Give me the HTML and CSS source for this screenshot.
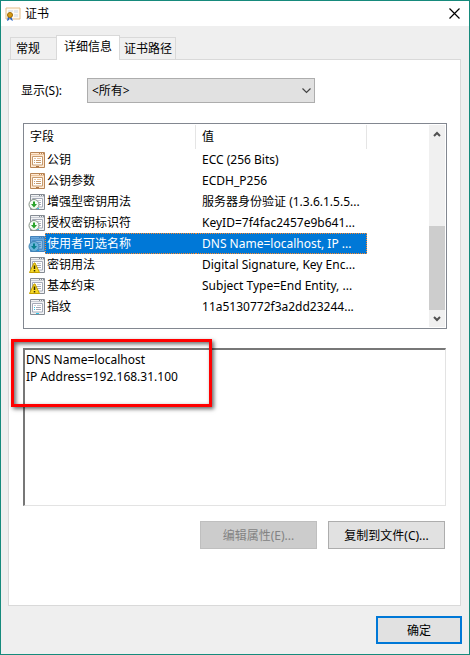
FILE: index.html
```html
<!DOCTYPE html>
<html lang="zh-CN">
<head>
<meta charset="utf-8">
<meta name="viewport" content="width=device-width, initial-scale=1">
<title>证书</title>
<link rel="stylesheet" href="styles.css">
</head>
<body>
<svg class="defs" aria-hidden="true">
  <defs>
    <g id="page" fill="none" stroke="currentColor">
      <path d="M.5.5h14v15H.5z" fill="var(--paper)"/>
      <path d="M1 2.500h13" stroke="var(--soft)"/>
      <path d="M9 1.500h1M11 1.500h1M13 1.500h1"/>
      <path d="M2.500 4.500h10v8.500h-10z" fill="#fff" stroke="var(--line)"/>
      <path d="M4 6.500h2M7 6.500h4" stroke="var(--soft)"/>
      <path d="M4 8.500h1M6 8.500h5M4 10.500h1M6 10.500h5" stroke="var(--line)"/>
      <path d="M6 14.500h3" stroke="var(--dot)"/>
    </g>
    <g id="arrow">
      <circle cx="4" cy="10.500" r="5" fill="var(--disc)" stroke="var(--ring)"/>
      <path d="M3 7.500h2V10h2l-3 3.500L1 10h2z" fill="var(--arrow)"/>
    </g>
    <g id="warning">
      <path d="M4 6L-.5 15.500h10L5 6z" fill="#f7d827" stroke="#c4a000"/>
      <path d="M4.500 8.500v3.500M4.500 13v1.500" stroke="#332b00" stroke-width="1.500"/>
    </g>
  </defs>
</svg>
<main class="window">
  <header class="titlebar">
    <svg class="cert-icon" viewBox="0 0 16 14" aria-hidden="true">
      <path d="M1 1h14v11H1z" fill="#fffaf2" stroke="#e3bd87"/>
      <path d="M3 3h5v2H3zM9 3h4v3H9zM9 7h4v3H9z" fill="#e4e8ee"/>
      <path d="M3 9l-1 5 2-1 1-3zM6 9l2 5-2-1-2-3z" fill="#2864c8"/>
      <circle cx="5" cy="8" r="2.500" fill="#d99b13" stroke="#9c6a06"/>
    </svg>
    <h1 class="title">证书</h1>
    <button class="close" type="button" aria-label="关闭">
      <svg viewBox="0 0 11 11"><path d="M.5.5l10 10M10.500.5l-10 10" fill="none" stroke="#000" stroke-width="1.200"/></svg>
    </button>
  </header>

  <div class="content">
    <div class="tabs" role="tablist">
      <button class="tab" type="button" role="tab">常规</button>
      <button class="tab tab-active" type="button" role="tab" aria-selected="true">详细信息</button>
      <button class="tab" type="button" role="tab">证书路径</button>
    </div>

    <section class="panel">
      <div class="filter">
        <label for="show">显示(S):</label>
        <div class="combo">
          <select id="show"><option>&lt;所有&gt;</option></select>
          <svg class="combo-arrow" viewBox="0 0 9 6" aria-hidden="true"><path d="M.5.5l4 4 4-4" fill="none" stroke="#444" stroke-width="1.200"/></svg>
        </div>
      </div>

      <div class="list">
        <div class="list-body">
          <table class="fields">
            <colgroup><col class="col-icon"><col class="col-name"><col class="col-value"></colgroup>
            <thead><tr><th colspan="2"><span class="head">字段</span></th><th><span class="head">值</span></th></tr></thead>
            <tbody>
              <tr><td class="icon tan"><svg viewBox="0 0 15 16"><use href="#page"/></svg></td><td>公钥</td><td class="value">ECC (256 Bits)</td></tr>
              <tr><td class="icon tan"><svg viewBox="0 0 15 16"><use href="#page"/></svg></td><td>公钥参数</td><td class="value">ECDH_P256</td></tr>
              <tr><td class="icon"><svg viewBox="0 0 15 16"><use href="#page"/><use href="#arrow"/></svg></td><td>增强型密钥用法</td><td class="value">服务器身份验证 (1.3.6.1.5.5...</td></tr>
              <tr><td class="icon"><svg viewBox="0 0 15 16"><use href="#page"/><use href="#arrow"/></svg></td><td>授权密钥标识符</td><td class="value">KeyID=7f4fac2457e9b641...</td></tr>
              <tr class="selected"><td class="icon blue"><svg viewBox="0 0 15 16"><use href="#page"/><path d="M2 4h11v9H2z" fill="#5899cf" opacity=".65"/><use href="#arrow"/></svg></td><td>使用者可选名称</td><td class="value">DNS Name=localhost, IP ...</td></tr>
              <tr><td class="icon"><svg viewBox="0 0 15 16"><use href="#page"/><use href="#warning"/></svg></td><td>密钥用法</td><td class="value">Digital Signature, Key Enc...</td></tr>
              <tr><td class="icon"><svg viewBox="0 0 15 16"><use href="#page"/><use href="#warning"/></svg></td><td>基本约束</td><td class="value">Subject Type=End Entity, ...</td></tr>
              <tr><td class="icon"><svg viewBox="0 0 15 16"><use href="#page"/><path d="M4 8.500h1M4 10.500h1" stroke="#2fc5e8"/></svg></td><td>指纹</td><td class="value">11a5130772f3a2dd23244...</td></tr>
            </tbody>
          </table>
        </div>
        <div class="scrollbar">
          <button class="scroll-button" type="button" aria-label="向上滚动"><svg viewBox="0 0 8 6"><path d="M1 5l3-3 3 3" fill="none" stroke="#505050" stroke-width="2"/></svg></button>
          <div class="track"><div class="thumb"></div></div>
          <button class="scroll-button" type="button" aria-label="向下滚动"><svg viewBox="0 0 8 6"><path d="M1 1l3 3 3-3" fill="none" stroke="#505050" stroke-width="2"/></svg></button>
        </div>
      </div>

      <div class="detail">
        <textarea class="detail-text" aria-label="字段值" readonly>DNS Name=localhost
IP Address=192.168.31.100</textarea>
        <div class="highlight"></div>
      </div>

      <div class="actions">
        <button class="button" type="button" disabled>编辑属性(E)...</button>
        <button class="button" type="button">复制到文件(C)...</button>
      </div>
    </section>

    <footer class="footer">
      <button class="button button-default" type="button">确定</button>
    </footer>
  </div>
</main>
</body>
</html>
```
FILE: styles.css
```css
* {
  box-sizing: border-box;
}

body {
  margin: 0;
}

body,
button,
select,
textarea {
  font-family: "Noto Sans", "Noto Sans CJK SC", sans-serif;
  font-size: 12px;
  line-height: 17px;
  color: #000;
}

button {
  padding: 0;
}

svg {
  display: block;
  overflow: visible;
}

.defs {
  position: absolute;
  width: 0;
  height: 0;
}

.window {
  display: flex;
  flex-direction: column;
  min-height: 100vh;
  border: 1px solid #168a7c;
  background: #efefef;
}

.titlebar {
  display: flex;
  align-items: center;
  height: 25px;
  padding: 0 9px 0 4px;
  background: #fff;
}

.cert-icon {
  width: 16px;
  height: 14px;
}

.title {
  flex: 1;
  margin: 0 0 0 4px;
  font-size: 12px;
  font-weight: 400;
}

.close {
  border: 0;
  background: none;
}

.close svg {
  width: 11px;
  height: 11px;
}

.content {
  display: flex;
  flex: 1;
  flex-direction: column;
  padding: 9px 7px 10px;
}

.tabs {
  display: flex;
  align-items: flex-end;
  padding-left: 2px;
}

.tab {
  height: 22px;
  padding: 0 3px 0 4px;
  border: 1px solid #d9d9d9;
  border-bottom: 0;
  background: #f0f0f0;
}

.tab:first-child {
  padding: 0 16px 0 5px;
  border-right: 0;
}

.tab:last-child {
  border-left: 0;
}

.tab-active {
  z-index: 1;
  height: 25px;
  margin-bottom: -1px;
  padding: 0 7px 3px;
  background: #fff;
}

.panel {
  flex: 1;
  margin-right: 1px;
  padding: 18px 14px 56px;
  border: 1px solid #d9d9d9;
  background: #fff;
}

.filter {
  display: grid;
  grid-template-columns: 66px minmax(0, 228px);
  align-items: center;
  margin-left: -2px;
}

.combo {
  position: relative;
}

.combo select {
  display: block;
  width: 100%;
  height: 25px;
  padding: 0 4px;
  border: 1px solid #adadad;
  border-radius: 0;
  background: #e1e1e1;
  appearance: none;
}

.combo-arrow {
  position: absolute;
  top: 10px;
  right: 4px;
  width: 9px;
  height: 6px;
}

.list {
  display: flex;
  min-height: 206px;
  margin-top: 20px;
  margin-right: -1px;
  border: 1px solid #828790;
}

.list-body {
  flex: 1;
  min-width: 0;
}

.fields {
  width: 343px;
  border-collapse: separate;
  border-spacing: 0;
  table-layout: fixed;
}

.col-icon {
  width: 21px;
}

.col-name {
  width: 151px;
}

.col-value {
  width: 171px;
}

.fields th {
  height: 25px;
  padding: 1px 0 0;
  font-weight: 400;
  text-align: left;
}

.head {
  display: block;
  padding: 3px 0 4px 6px;
  border-right: 1px solid #e5e5e5;
}

.fields td {
  height: 21px;
  padding: 0 2px;
  border: 1px solid transparent;
  border-width: 1px 0;
  white-space: nowrap;
}

.fields .value {
  padding-left: 6px;
}

.fields .icon {
  --paper: #f1f2f4;
  --soft: #c7cbd2;
  --line: #a5aab8;
  --dot: #2fc5e8;
  --disc: #f4fbf4;
  --ring: #8b958b;
  --arrow: #2ba32b;
  padding: 0 0 0 6px;
  color: #858b93;
}

.fields .tan {
  --paper: #ffe9d2;
  --soft: #e9c29c;
  --line: #c79b6f;
  --dot: #ad7544;
  color: #b98555;
}

.fields .blue {
  --paper: #6aa9dc;
  --soft: #5595cf;
  --line: #3779bb;
  --dot: #159be8;
  --disc: #6bb4dc;
  --ring: #4384b4;
  --arrow: #087f8c;
  color: #4382bb;
}

.icon svg {
  width: 15px;
  height: 16px;
}

.fields .selected td:not(.icon) {
  border-color: #ff8728;
  border-style: dotted;
  background: #0078d7;
  background-clip: border-box;
  color: #fff;
}

.fields .selected td:nth-child(2) {
  padding-left: 1px;
  border-left-width: 1px;
}

.fields .selected .value {
  border-right-width: 1px;
}

.scrollbar {
  display: flex;
  flex-direction: column;
  width: 16px;
  margin: 1px;
  background: #f0f0f0;
}

.scroll-button {
  display: flex;
  align-items: center;
  justify-content: center;
  height: 17px;
  border: 0;
  background: none;
}

.scroll-button svg {
  width: 8px;
  height: 6px;
}

.track {
  display: flex;
  flex: 1;
  flex-direction: column;
  justify-content: flex-end;
}

.thumb {
  height: 50%;
  background: #cdcdcd;
}

.detail {
  position: relative;
  margin-top: 19px;
}

.detail-text {
  display: block;
  width: 100%;
  height: 158px;
  padding: 1px;
  border: 2px solid;
  border-color: #777 #e3e3e3 #e3e3e3 #777;
  border-width: 2px 1px 1px 2px;
  outline: 0;
  background: #fff;
  resize: none;
}

.highlight {
  position: absolute;
  top: -9px;
  left: -12px;
  width: 201px;
  height: 68px;
  border: 3px solid #f00;
  box-shadow: 2px 2px 4px #0009, inset 2px 2px 4px #0009;
  pointer-events: none;
}

.actions {
  display: flex;
  justify-content: flex-end;
  gap: 11px;
  margin-top: 15px;
  padding-right: 1px;
}

.button {
  width: 117px;
  height: 28px;
  border: 1px solid #adadad;
  background: #e1e1e1;
}

.button:disabled {
  border-color: #bfbfbf;
  background: #ccc;
  color: #838383;
}

.footer {
  display: flex;
  justify-content: flex-end;
  margin-top: 10px;
}

.button-default {
  width: 86px;
  border: 2px solid #0078d7;
}
```
